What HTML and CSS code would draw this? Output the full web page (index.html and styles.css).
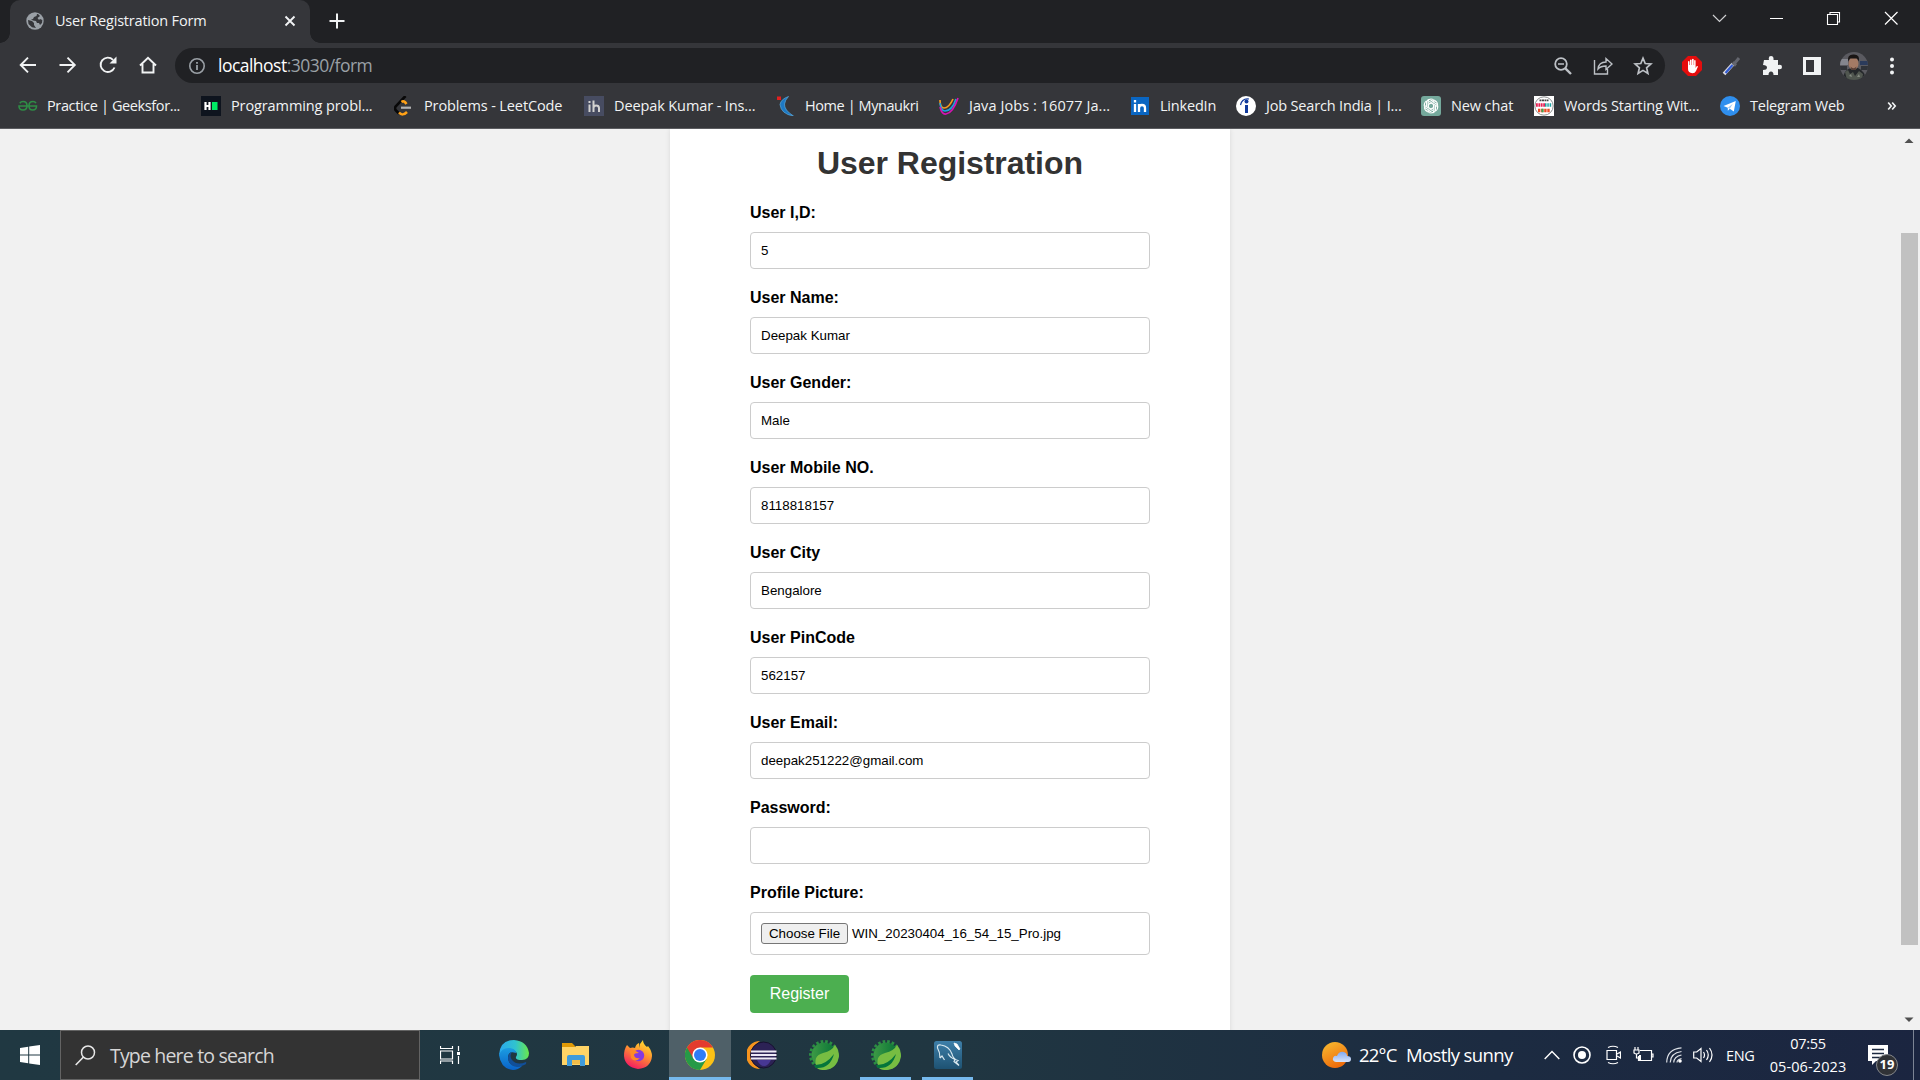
FILE: index.html
```html
<!DOCTYPE html>
<html lang="en">
<head>
<meta charset="utf-8">
<title>User Registration Form</title>
<link rel="stylesheet" href="styles.css">
</head>
<body>
<header class="browser">
  <div class="tabstrip">
    <div class="tab">
      <svg class="globe" width="18" height="18" viewBox="0 0 18 18"><circle cx="9" cy="9" r="8.700" fill="#9aa0a6"/><path d="M2 8l4 1 2 2v2l2 3-4-.8L2.500 12zM8 2h3l-.5 2L8 5 7 7 5 7.500l2 1 3 .5 1 2h2l1 2 2-2 .3-3L14 7l-1 1-1.500-2L14 4l-2-2z" fill="#35363a"/></svg>
      <span class="tab-title">User Registration Form</span>
      <svg class="tab-close" width="12" height="12" viewBox="0 0 12 12"><path d="M1.500 1.500l9 9M10.500 1.500l-9 9" stroke="#f1f3f4" stroke-width="1.900"/></svg>
    </div>
    <svg class="new-tab" width="16" height="16" viewBox="0 0 16 16"><path d="M8 .5v15M.5 8h15" stroke="#f1f3f4" stroke-width="2"/></svg>
    <div class="window-buttons">
      <svg width="57" height="36" viewBox="0 0 57 36"><path d="M22 15l6.500 6.500L35 15" fill="none" stroke="#cfd0d2" stroke-width="1.200"/></svg>
      <svg width="57" height="36" viewBox="0 0 57 36"><path d="M22 18.500h13" stroke="#fff"/></svg>
      <svg width="57" height="36" viewBox="0 0 57 36"><path d="M22.500 14.500h10v10h-10zM25 14v-1.500h9.500V22H33" fill="none" stroke="#fff" stroke-width="1.100"/></svg>
      <svg width="57" height="36" viewBox="0 0 57 36"><path d="M23 12l12.500 12.500M35.500 12L23 24.500" stroke="#fff" stroke-width="1.200"/></svg>
    </div>
  </div>
  <div class="toolbar">
    <div class="slots nav">
      <svg width="20" height="20" viewBox="0 0 20 20"><path d="M18 10H3M10 2.700L2.700 10l7.300 7.300" fill="none" stroke="#f1f3f4" stroke-width="1.900"/></svg>
      <svg width="20" height="20" viewBox="0 0 20 20"><path d="M1.500 10h15M9.500 2.700l7.300 7.300-7.300 7.300" fill="none" stroke="#f1f3f4" stroke-width="1.900"/></svg>
      <svg width="20" height="20" viewBox="0 0 20 20"><path d="M16.500 12.500A7.200 7.200 0 1 1 15 4.800" fill="none" stroke="#f1f3f4" stroke-width="1.900"/><path d="M18.500 1.500v7h-7z" fill="#f1f3f4"/></svg>
      <svg width="20" height="20" viewBox="0 0 20 20"><path d="M2 10.500L10 2.800l8 7.700M4.500 9v8.500h11V9" fill="none" stroke="#f1f3f4" stroke-width="1.900"/></svg>
    </div>
    <div class="omnibox">
      <svg width="18" height="18" viewBox="0 0 18 18"><circle cx="9" cy="9" r="7.200" fill="none" stroke="#9aa0a6" stroke-width="1.600"/><path d="M9 8v5M9 4.900v1.900" stroke="#9aa0a6" stroke-width="1.800"/></svg>
      <span class="url"><b>localhost</b>:3030/form</span>
      <div class="slots">
        <svg width="20" height="20" viewBox="0 0 20 20"><circle cx="8" cy="8" r="5.800" fill="none" stroke="#bdc1c6" stroke-width="1.800"/><path d="M12.300 12.300l5.700 5.700" stroke="#bdc1c6" stroke-width="2.400"/><path d="M5 8h6" stroke="#bdc1c6" stroke-width="1.500"/></svg>
        <svg width="20" height="20" viewBox="0 0 20 20"><path d="M1.500 4v14h13v-5M5 13c.5-4.500 3-7 8-7V2.500l6 5.500-6 5.500V10c-4 0-6 .8-8 3z" fill="none" stroke="#bdc1c6" stroke-width="1.400"/></svg>
        <svg width="20" height="20" viewBox="0 0 20 20"><path d="M10 2.200l2.200 5.300 5.700.5-4.300 3.800 1.300 5.600L10 14.400l-4.900 3 1.300-5.600L2.100 8l5.700-.5z" fill="none" stroke="#bdc1c6" stroke-width="1.700"/></svg>
      </div>
    </div>
    <div class="slots extensions">
      <svg width="20" height="20" viewBox="0 0 20 20"><path d="M6 0h8l6 6v8l-6 6H6l-6-6V6z" fill="#e40d0d"/><path d="M6 10V5.500q.8-1 1.500 0V9h.5V4q.8-1 1.600 0v5h.4V3.200q.9-.9 1.700 0V9h.4V4.500q.8-.9 1.500 0V12l1-1.800q1-.6 1.400.3L14 15q-1 2.200-3.500 2.200Q6 17 6 13z" fill="#fff"/></svg>
      <svg width="20" height="20" viewBox="0 0 20 20"><path d="M2 18l9-10" stroke="#dcdce4" stroke-width="3.600"/><path d="M3.500 17l7-8" stroke="#315bd2" stroke-width="2.200"/><path d="M10.500 6.500l3.500 3M12 8l5-6" stroke="#64666e" stroke-width="3"/></svg>
      <svg width="20" height="20" viewBox="0 0 20 20"><path d="M2 4h5q-1-4 2-4t2.500 4H16v5q4-1 4 2t-4 2v6h-4.500q0-3.500-2.500-3.500T6.500 19H1v-5q4 0 4-2.500T1 9z" fill="#f1f3f4"/></svg>
      <svg width="20" height="20" viewBox="0 0 20 20"><path d="M1 1h18v18H1z" fill="#f1f3f4"/><path d="M4 4h8v12H4z" fill="#35363a"/></svg>
      <svg class="avatar" width="28" height="28" viewBox="0 0 28 28"><clipPath id="av"><circle cx="14" cy="14" r="14"/></clipPath><g clip-path="url(#av)"><path d="M0 0h28v28H0z" fill="#5a5a60"/><path d="M0 7h8v6H0z" fill="#84868e"/><path d="M20 9h8v4h-8z" fill="#2b3b5b"/><path d="M0 14h7v4H0zM21 14h7v4h-7z" fill="#303338"/><path d="M3 28q0-10 8-12h7q7 3 8 12z" fill="#25282b"/><path d="M5 20l3-2 2 4 3-2 2 4 4-5 4 3-1 6H7z" fill="#50564f"/><path d="M9 24l2-2 1 3zM17 25l2-3 1 3z" fill="#858b82"/><ellipse cx="13.500" cy="11.500" rx="5" ry="6.500" fill="#a57b65"/><path d="M8 9.500q-1-7.500 6-7 6 0 5 7l-2-3h-7z" fill="#191514"/><path d="M10.500 14.500q3 3.500 6 0l-1 3.500h-4z" fill="#5a4037"/></g></svg>
      <svg width="20" height="20" viewBox="0 0 20 20" fill="#f1f3f4"><circle cx="10" cy="3.500" r="2"/><circle cx="10" cy="10" r="2"/><circle cx="10" cy="16.500" r="2"/></svg>
    </div>
  </div>
  <nav class="bookmarks">
    <a class="practice"><svg width="20" height="20" viewBox="0 0 20 20"><path d="M1.800 7.200Q3 5.500 5 5.500q4 0 4 4.200T5 14q-4 0-4-4h17.500q0 4-3.800 4T11 9.700q0-4.200 4-4.200 2 0 3 1.700" fill="none" stroke="#2f8d46" stroke-width="1.600"/></svg><span>Practice | Geeksfor...</span></a>
    <a><svg width="20" height="20" viewBox="0 0 20 20"><path d="M0 0h20v20H0z" fill="#0e141e"/><path d="M4.500 6v8M8.500 6v8M4 10h5" stroke="#fff" stroke-width="2.200"/><path d="M11 6h5.500v8H11z" fill="#00ea64"/></svg><span>Programming probl...</span></a>
    <a><svg width="20" height="20" viewBox="0 0 20 20"><path d="M11.500 0L2 10q-2 2.500 0 4.500l3 3" fill="none" stroke="#080808" stroke-width="2.600"/><path d="M5 16.500q3.500 4 8-.5M7.500 6q2.500-2 5 2" fill="none" stroke="#ffa116" stroke-width="2.500"/><path d="M7 11.700h10" stroke="#b3b3b3" stroke-width="2.200"/></svg><span>Problems - LeetCode</span></a>
    <a><svg width="20" height="20" viewBox="0 0 20 20"><path d="M0 0h20v20H0z" fill="#474c61"/><path d="M5.500 8.500V16M5.500 5v2M9.500 4.500V16M9.500 16v-4q0-2.500 2.700-2.500T15 12v4" fill="none" stroke="#d2d1cf" stroke-width="2"/></svg><span>Deepak Kumar - Ins...</span></a>
    <a class="naukri"><svg width="20" height="20" viewBox="0 0 20 20"><path d="M12.500 .5Q5 3 4 8.500 5 18 17.500 20 8 14 8.500 8 9 4 12.500.5z" fill="#1d79c4" stroke="#5aa9dd" stroke-width=".7"/><path d="M1 .5h4v3.500H1z" fill="#e2201f"/></svg><span>Home | Mynaukri</span></a>
    <a class="jobs"><svg width="20" height="20" viewBox="0 0 20 20"><g fill="none" stroke-width="1.700"><path d="M1 4q0 8 4 8 5 0 9-9" stroke="#f79a1c"/><path d="M1 7q1 8 5 8 7 0 11-12" stroke="#1ba4dc"/><path d="M1 11q2 8 6 7Q14 17 19 2" stroke="#d713b5"/></g></svg><span>Java Jobs : 16077 Ja...</span></a>
    <a class="linkedin"><svg width="20" height="20" viewBox="0 0 20 20"><path d="M0 1h18v18H0z" fill="#0a66c2"/><path d="M4 8v8M4 4v2.500M8 8v8M8 16v-4q0-3 3-3t3 3v4" fill="none" stroke="#fff" stroke-width="2.300"/></svg><span>LinkedIn</span></a>
    <a class="indeed"><svg width="20" height="20" viewBox="0 0 20 20"><circle cx="10" cy="10" r="10" fill="#fff"/><path d="M10.500 9v8" stroke="#123a9c" stroke-width="3"/><circle cx="10.500" cy="5.500" r="2" fill="#123a9c"/><path d="M4.500 9Q6 2 13 3" fill="none" stroke="#123a9c" stroke-width="1.200"/></svg><span>Job Search India | I...</span></a>
    <a><svg width="20" height="20" viewBox="0 0 20 20"><rect width="20" height="20" rx="3" fill="#75a99c"/><g fill="none" stroke="#fff" stroke-width="1"><path id="petal" d="M7 11V6q0-3 3-3 2 0 3 1.500M10 13l-3-2M7 6.500l4-2.300q3-.8 4.500 1.800"/><use href="#petal" transform="rotate(60 10 10)"/><use href="#petal" transform="rotate(120 10 10)"/><use href="#petal" transform="rotate(180 10 10)"/><use href="#petal" transform="rotate(240 10 10)"/><use href="#petal" transform="rotate(300 10 10)"/></g></svg><span>New chat</span></a>
    <a><svg width="20" height="20" viewBox="0 0 20 20"><path d="M0 0h20v20H0z" fill="#fff"/><circle cx="10" cy="10" r="9.200" fill="none" stroke="#8a8d8d"/><path d="M5.500 4.300h9" stroke="#444" stroke-width="1.700" stroke-dasharray="2 .5"/><path d="M2 9h9" stroke="#e62355" stroke-width="3.500" stroke-dasharray="1.800 .6"/><path d="M11 9h7" stroke="#21a3a3" stroke-width="3.500" stroke-dasharray="1.500 .8"/><path d="M4 14.500h12" stroke="#ed4b25" stroke-width="3.500" stroke-dasharray="2.400 .7"/><path d="M7.500 14.500h2" stroke="#37a853" stroke-width="3.500"/></svg><span>Words Starting Wit...</span></a>
    <a class="telegram"><svg width="20" height="20" viewBox="0 0 20 20"><circle cx="10" cy="10" r="10" fill="#2f8fee"/><path d="M3.500 10L15.800 5l-2 10.500-4-2.800-2 2V11.700z" fill="#fff"/><path d="M7.800 11.700l5-4-3 5z" fill="#9bc8f5"/></svg><span>Telegram Web</span></a>
    <svg class="more" width="10" height="10" viewBox="0 0 10 10"><path d="M1.200 1.500L4.200 5l-3 3.500M5.200 1.500L8.200 5l-3 3.500" fill="none" stroke="#f1f3f4" stroke-width="1.700"/></svg>
  </nav>
</header>

<main class="page">
  <div class="canvas">
    <form class="card">
      <h1>User Registration</h1>
      <label>User I,D:</label><div class="field">5</div>
      <label>User Name:</label><div class="field">Deepak Kumar</div>
      <label>User Gender:</label><div class="field">Male</div>
      <label>User Mobile NO.</label><div class="field">8118818157</div>
      <label>User City</label><div class="field">Bengalore</div>
      <label>User PinCode</label><div class="field">562157</div>
      <label>User Email:</label><div class="field">deepak251222@gmail.com</div>
      <label>Password:</label><div class="field"></div>
      <label>Profile Picture:</label>
      <div class="field file"><span class="choose">Choose File</span><span>WIN_20230404_16_54_15_Pro.jpg</span></div>
      <button type="button" class="register">Register</button>
    </form>
  </div>
  <div class="scrollbar">
    <svg width="20" height="20" viewBox="0 0 20 20"><path d="M4.500 14L9 9.500l4.500 4.500z" fill="#505050"/></svg>
    <div class="thumb"></div>
    <svg width="20" height="20" viewBox="0 0 20 20"><path d="M4.500 7.500h9L9 12z" fill="#505050"/></svg>
  </div>
</main>

<footer class="taskbar">
  <div class="start"><svg width="20" height="20" viewBox="0 0 20 20" fill="#fff"><path d="M0 3l8.200-1.200v7.700H0zM9.200 1.600L20 0v9.500H9.200zM0 10.500h8.200v7.700L0 17zM9.200 10.500H20V20L9.200 18.400z"/></svg></div>
  <div class="search">
    <svg width="21" height="21" viewBox="0 0 21 21"><circle cx="13" cy="7.500" r="6.500" fill="none" stroke="#e8e8e8" stroke-width="1.500"/><path d="M8.500 12L.7 20" stroke="#e8e8e8" stroke-width="1.600"/></svg>
    <span>Type here to search</span>
  </div>
  <div class="apps">
    <div class="app"><svg width="20" height="20" viewBox="0 0 20 20"><path d="M.5 1v2.500h12V1M.5 19v-3h12v3M.5 6h12v8H.5zM18.500 1v5M18.500 11v8" fill="none" stroke="#fff" stroke-width="1.200"/><path d="M17 7h3v3h-3z" fill="#fff"/></svg></div>
    <div class="app"><svg width="30" height="30" viewBox="0 0 30 30"><defs><linearGradient id="e1"><stop offset="0" stop-color="#2aa7ee"/><stop offset=".55" stop-color="#30c3cf"/><stop offset="1" stop-color="#6ae84a"/></linearGradient><linearGradient id="e2" x2="0" y2="1"><stop offset="0" stop-color="#1b9de2"/><stop offset="1" stop-color="#0a62c8"/></linearGradient></defs><path d="M0 15Q1 0 15 0q13 1 15 13 0 7-7 7-7 0-6-3 2-3 0-5Q11 5 0 15z" fill="url(#e1)"/><path d="M0 15Q3 7 11 8q6 1 6 5-8-3-8 5 1 10 14 8-4 4-9 4Q2 29 0 15z" fill="url(#e2)"/><path d="M13 12q-6 3-3 10 5 8 15 3 3-1 2-3-9 4-14-2-3-4 0-8z" fill="#114f99"/></svg></div>
    <div class="app"><svg width="30" height="30" viewBox="0 0 30 30"><path d="M1 3h10l3 3v5H1z" fill="#e09a06"/><path d="M1 7h13l1-1h13v19H1z" fill="#ffd466"/><path d="M6 26V17q0-2 2-2h14q2 0 2 2v9h-5v-6h-8v6z" fill="#3f9bdb"/><path d="M11 20h8v4h-8z" fill="#f2bd49"/></svg></div>
    <div class="app"><svg width="30" height="30" viewBox="0 0 30 30"><defs><linearGradient id="f" x1=".8" y1="0" x2=".3" y2="1"><stop offset="0" stop-color="#ffe72f"/><stop offset=".45" stop-color="#ff9130"/><stop offset="1" stop-color="#f41564"/></linearGradient></defs><path d="M4 5l3 3q3-1 5 0 1-4 4-5l1 5V4l3-4q0 4 4 7l1-1q4 5 4 10-1 12-14 13Q2 27 1 16 1 9 4 5z" fill="url(#f)"/><circle cx="15.500" cy="15.500" r="5.700" fill="#8539df"/><path d="M7 11q4-2 9 2-5 0-5 2 1 4 6 3-5 5-9 0z" fill="#ff8b27"/></svg></div>
    <div class="app active"><svg width="30" height="30" viewBox="0 0 30 30"><circle cx="15" cy="15" r="15" fill="#fbc116"/><path d="M2 7.500A15 15 0 0 0 15 30l6.500-11-6.500-4z" fill="#269a47"/><path d="M2 7.500A15 15 0 0 1 28 7.500H15L8.500 18.700z" fill="#e33b2e"/><circle cx="15" cy="15" r="7.600" fill="#fff"/><circle cx="15" cy="15" r="6" fill="#2f7cf6"/></svg></div>
    <div class="app"><svg width="30" height="30" viewBox="0 0 30 30"><path d="M13 1A14 14 0 0 0 13 29Q5 24 5 15T13 1z" fill="#f7941e"/><circle cx="16.500" cy="15" r="13" fill="#2c2255" stroke="#17122f"/><path d="M10 20h14q-3 6-7 6t-7-6z" fill="#473793"/><path d="M4 11.500h25.500M4 15h25.500M4 18.500h25.500" stroke="#ece9f5" stroke-width="2"/></svg></div>
    <div class="app"><svg width="30" height="30" viewBox="0 0 30 30"><defs><linearGradient id="s"><stop offset="0" stop-color="#3d9a45"/><stop offset="1" stop-color="#057236"/></linearGradient></defs><circle cx="15" cy="15" r="12.500" fill="url(#s)"/><circle cx="15" cy="15" r="13.500" fill="none" stroke="#2b8d43" stroke-width="3" stroke-dasharray="2.600 2"/><path d="M26 5q4 5 4 11-2 13-14 14-6 0-8-2-5-12 6-15 9-2 12-8z" fill="#77bd42"/><path d="M5 25q11 1 20-11-4 15-18 14z" fill="#05753b"/></svg></div>
    <div class="app running"><svg width="30" height="30" viewBox="0 0 30 30"><circle cx="15" cy="15" r="12.500" fill="url(#s)"/><circle cx="15" cy="15" r="13.500" fill="none" stroke="#2b8d43" stroke-width="3" stroke-dasharray="2.600 2"/><path d="M26 5q4 5 4 11-2 13-14 14-6 0-8-2-5-12 6-15 9-2 12-8z" fill="#77bd42"/><path d="M5 25q11 1 20-11-4 15-18 14z" fill="#05753b"/></svg></div>
    <div class="app running"><svg width="30" height="30" viewBox="0 0 30 30"><defs><linearGradient id="m" x2="0" y2="1"><stop offset="0" stop-color="#3e7fa9"/><stop offset="1" stop-color="#1e5272"/></linearGradient></defs><rect x="1" y="1" width="28" height="28" rx="2.500" fill="url(#m)"/><path d="M7 18Q7 12 4.500 8q-.5-4 3.500-3 8 1 11 9 1 5 6 6.500l-2 1.500 3 3.500-5-4 1-2q-5-2-7-6M7 18l2-2 2.500 4" fill="none" stroke="#d9e8ef" stroke-width="1.200"/><path d="M21 3l1 3 4 4 1-1-3-5z" fill="#fff" stroke="#fff" stroke-width=".7"/></svg></div>
  </div>
  <div class="tray">
    <svg class="weather" width="30" height="30" viewBox="0 0 30 30"><defs><linearGradient id="w" x2=".5" y2="1"><stop offset="0" stop-color="#f8be32"/><stop offset="1" stop-color="#ee6c0b"/></linearGradient><linearGradient id="c" x2="0" y2="1"><stop offset="0" stop-color="#82a9ef"/><stop offset="1" stop-color="#d7e3fa"/></linearGradient></defs><circle cx="14" cy="15" r="13" fill="url(#w)"/><path d="M15 22q-4-1-3-4t4-2q2-5 7-4 3 1 3 4 4 0 4 3t-3 3z" fill="url(#c)"/></svg>
    <span class="temp">22°C</span><span class="sky">Mostly sunny</span>
    <svg class="chev" width="16" height="10" viewBox="0 0 16 10"><path d="M.7 9L8 1.500 15.300 9" fill="none" stroke="#fff" stroke-width="1.400"/></svg>
    <svg class="rec" width="18" height="18" viewBox="0 0 18 18"><circle cx="9" cy="9" r="8" fill="none" stroke="#fff" stroke-width="1.600"/><circle cx="9" cy="9" r="4" fill="#fff"/></svg>
    <svg class="cam" width="15" height="20" viewBox="0 0 15 20"><path d="M1 5.500h9.500v9H1zM11 9l3.500-2v6L11 11M2 2.500Q7 0 12 2.500M2 17.500q5 2.500 10 0" fill="none" stroke="#fff" stroke-width="1.200"/></svg>
    <svg class="bat" width="21" height="16" viewBox="0 0 21 16"><path d="M7 3.500h11.500v10h-13V9M18.500 7h1.500v3h-1.500M2 0v3M5 0v3M1 3h5v3q-2.500 2-5 0zM3.500 7v4H6" fill="none" stroke="#fff" stroke-width="1.200"/><path d="M6 8h2v5H6z" fill="#fff"/></svg>
    <svg class="wifi" width="16" height="16" viewBox="0 0 16 16"><g fill="none" stroke="#dfe3e8" stroke-width="1.200"><path d="M.7 15.500Q1 2 15.500.8M4.200 15.500Q4.500 6 15.500 4.500M7.700 15.500Q8 9.500 15.500 8M11 15.500q0-3 4.500-4"/></g><circle cx="14" cy="14" r="1.800" fill="#fff"/></svg>
    <svg class="vol" width="20" height="18" viewBox="0 0 20 18"><path d="M.7 6h3L8 2.500v13L3.700 12h-3zM10.500 6q2 3 0 6M13.500 4q3.500 5 0 10M16.500 2q5 7 0 14" fill="none" stroke="#fff" stroke-width="1.200"/></svg>
    <span class="lang">ENG</span>
    <div class="clock"><span>07:55</span><span class="date">05-06-2023</span></div>
    <div class="notify"><svg width="20" height="20" viewBox="0 0 20 20"><path d="M0 0h20v16H8l-4 4v-4H0z" fill="#fff"/><path d="M4 4.500h12M4 8.500h12M4 12.500h8" stroke="#1c2940" stroke-width="1.300"/></svg><b class="badge">19</b></div>
  </div>
</footer>
</body>
</html>
```
FILE: styles.css
```css
* { box-sizing: border-box; }
body {
  margin: 0;
  width: 1920px;
  height: 1080px;
  overflow: hidden;
  display: flex;
  flex-direction: column;
  font-family: "Open Sans", "Noto Sans", sans-serif;
}
svg { display: block; flex: none; }
span { white-space: nowrap; }

/* Browser chrome */
.browser { height: 129px; background: #35363a; border-bottom: 1px solid #5b5c60; color: #f1f3f4; }
.tabstrip { height: 43px; background: #202124; display: flex; align-items: flex-start; }
.tab {
  position: relative;
  width: 300px;
  height: 43px;
  margin-left: 10px;
  padding: 0 14px 1px 16px;
  border-radius: 10px 10px 0 0;
  background: #35363a;
  display: flex;
  align-items: center;
}
.tab::before, .tab::after {
  content: "";
  position: absolute;
  bottom: 0;
  width: 10px;
  height: 10px;
}
.tab::before { left: -10px; background: radial-gradient(circle at 0 0, transparent 9.5px, #35363a 10px); }
.tab::after { right: -10px; background: radial-gradient(circle at 100% 0, transparent 9.5px, #35363a 10px); }
.tab-title { margin-left: 11px; padding-bottom: 2px; font-size: 14.5px; letter-spacing: -.2px; }
.tab-close { margin-left: auto; }
.new-tab { margin: 13px 0 0 19px; }
.window-buttons { display: flex; margin-left: auto; width: 229px; }

.toolbar { height: 45px; display: flex; align-items: center; }
.slots { display: grid; grid-auto-flow: column; grid-auto-columns: 40px; align-items: center; justify-items: center; }
.nav { margin-left: 8px; padding-bottom: 1px; }
.omnibox {
  width: 1490px;
  height: 35px;
  margin-left: 7px;
  padding: 0 2px 0 13px;
  border-radius: 18px;
  background: #202124;
  display: flex;
  align-items: center;
}
.omnibox .slots { margin-left: auto; }
.url { margin-left: 12px; padding-bottom: 1px; font-size: 17.5px; color: #9aa0a6; letter-spacing: -.52px; }
.url b { font-weight: 400; color: #fff; }
.extensions { margin-left: 7px; }
.avatar { margin-left: 3px; }

.bookmarks {
  height: 36px;
  padding-left: 18px;
  display: grid;
  grid-template-columns: 183px 193px 190px 192px 163px 192px 105px 185px 113px 186px 167px 20px;
  align-items: center;
  font-size: 14.5px;
}
.bookmarks a { display: flex; align-items: center; gap: 10px; letter-spacing: -.11px; }
.bookmarks span { padding-bottom: 2px; }
.bookmarks .practice { gap: 9px; letter-spacing: -.38px; }
.bookmarks .naukri { gap: 9px; letter-spacing: -.42px; }
.bookmarks .jobs { letter-spacing: .08px; }
.bookmarks .linkedin { gap: 9px; letter-spacing: -.2px; }
.bookmarks .indeed { letter-spacing: -.17px; }
.bookmarks .telegram { letter-spacing: -.24px; }

/* Registration page */
.page { height: 901px; background: #f1f1f1; display: flex; overflow: hidden; }
.canvas { width: 1900px; display: flex; justify-content: center; }
.card {
  width: 560px;
  height: 960px;
  padding: 15px 80px 0;
  background: #fff;
  box-shadow: 0 0 5px rgba(0, 0, 0, .1);
  display: flex;
  flex-direction: column;
  align-items: stretch;
  font-family: "Liberation Sans", Arial, sans-serif;
}
.card h1 { margin: 0 0 22px; font-size: 32px; line-height: 38px; letter-spacing: -.05px; text-align: center; color: #333; }
.card label { font-size: 16px; line-height: 18px; font-weight: 700; color: #000; margin-bottom: 10px; }
.field {
  height: 37px;
  flex: none;
  margin-bottom: 20px;
  padding: 0 10px;
  border: 1px solid #ccc;
  border-radius: 4px;
  display: flex;
  align-items: center;
  font-size: 13.33px;
  color: #000;
}
.field.file { height: 43px; gap: 4px; }
.choose {
  height: 21px;
  width: 87px;
  border: 1px solid #767676;
  border-radius: 3px;
  background: #efefef;
  text-align: center;
  line-height: 19px;
}
.register {
  width: 99px;
  height: 38px;
  border: 0;
  border-radius: 4px;
  background: #4caf50;
  color: #fff;
  font: 16px "Liberation Sans", Arial, sans-serif;
}
.scrollbar { width: 20px; display: flex; flex-direction: column; background: #f1f1f1; }
.thumb { width: 17px; height: 712px; margin: 84px 0 auto 1px; background: #c1c1c1; }

/* Windows taskbar */
.taskbar {
  height: 50px;
  background: linear-gradient(90deg, #203842 0, #203641 50%, #1c2b41 78%, #1b2540 100%);
  color: #fff;
  display: flex;
}
.taskbar > div { flex: none; }
.start { width: 60px; display: flex; align-items: center; justify-content: center; }
.search {
  width: 360px;
  border: 1px solid #636363;
  background: #333;
  color: #d6d6d6;
  padding-left: 14px;
  display: flex;
  align-items: center;
  gap: 14px;
  font-size: 19.5px;
  letter-spacing: -.82px;
}
.apps { display: grid; grid-template-columns: 63px repeat(8, 62px); }
.app { display: flex; align-items: center; justify-content: center; }
.app:first-child { padding-right: 4px; }
.active { background: #4f6068; border-bottom: 3px solid #76b9ed; padding-top: 3px; }
.running { margin: 0 6px 0 5px; border-bottom: 3px solid #76b9ed; padding-top: 3px; }
.tray { margin-left: 342px; display: flex; align-items: center; font-size: 18.5px; }
.temp { margin-left: 8px; width: 47px; padding-bottom: 1px; letter-spacing: -.8px; }
.sky { width: 138px; padding-bottom: 1px; letter-spacing: -.62px; }
.rec { margin-left: 13px; }
.cam { margin-left: 15px; }
.bat { margin-left: 12px; }
.wifi { margin-left: 12px; }
.vol { margin-left: 11px; }
.lang { margin-left: 13px; width: 35px; font-size: 14.5px; letter-spacing: -.3px; }
.clock { width: 94px; display: flex; flex-direction: column; align-items: center; font-size: 14.5px; line-height: 23px; letter-spacing: -.3px; }
.date { letter-spacing: .1px; }
.notify { position: relative; margin: 0 25px 0 13px; }
.badge {
  position: absolute;
  left: 8px;
  top: 9px;
  width: 22px;
  height: 22px;
  border: 1px solid #85878a;
  border-radius: 50%;
  background: #303236;
  font-size: 13px;
  line-height: 19px;
  text-align: center;
}
.tray::after { content: ""; align-self: stretch; width: 1px; background: #7c8494; }
```
